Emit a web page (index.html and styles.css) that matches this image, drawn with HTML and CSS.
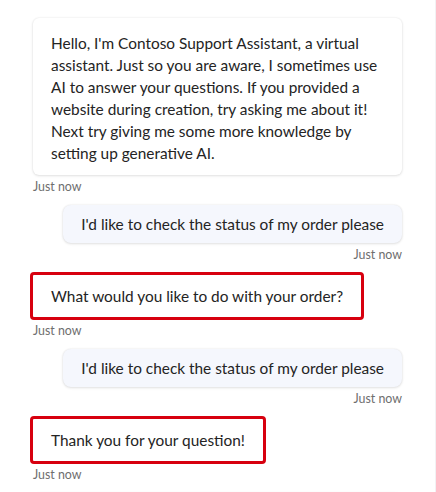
FILE: index.html
```html
<!DOCTYPE html>
<html lang="en">
<head>
<meta charset="utf-8">
<title>Chat</title>
<link rel="stylesheet" href="styles.css">
</head>
<body>
<div class="chat">
  <div class="msg bot">
    <div class="bubble intro">Hello, I'm Contoso Support Assistant, a virtual assistant. Just so you are aware, I sometimes use AI to answer your questions. If you provided a website during creation, try asking me about it! Next try giving me some more knowledge by setting up generative AI.</div>
    <div class="time">Just now</div>
  </div>
  <div class="msg user">
    <div class="bubble">I'd like to check the status of my order please</div>
    <div class="time">Just now</div>
  </div>
  <div class="msg bot flagged">
    <div class="bubble marked">What would you like to do with your order?</div>
    <div class="time">Just now</div>
  </div>
  <div class="msg user">
    <div class="bubble">I'd like to check the status of my order please</div>
    <div class="time">Just now</div>
  </div>
  <div class="msg bot flagged">
    <div class="bubble marked short">Thank you for your question!</div>
    <div class="time">Just now</div>
  </div>
  <div class="msg bot">
    <div class="bubble next"></div>
  </div>
</div>
</body>
</html>
```
FILE: styles.css
```css
html, body {
  margin: 0;
  padding: 0;
  background: #ffffff;
  height: 100%;
  overflow: hidden;
}
body {
  font-family: Lato, "Noto Sans", sans-serif;
  color: #242424;
}
.chat {
  display: flex;
  flex-direction: column;
  gap: 10px;
  padding: 18px 33px 0 33px;
  border-right: 1px solid #f2f2f4;
  height: 100%;
  box-sizing: border-box;
}
.msg {
  display: flex;
  flex-direction: column;
}
.msg.bot { align-items: flex-start; }
.msg.user { align-items: flex-end; }
.msg.flagged { margin-top: 2px; }
.bubble {
  font-size: 15.4px;
  line-height: 22px;
  padding: 10px 18px;
  border-radius: 6px;
  background: #ffffff;
  box-shadow: 0 0 2px rgba(0,0,0,0.10), 0 1px 3px rgba(0,0,0,0.10);
}
.bubble.intro {
  padding: 14px 18px 11px 18px;
}
.bubble.next {
  align-self: stretch;
  height: 40px;
  padding: 0;
}
.msg.user .bubble {
  background: #f5f7fd;
  padding: 8px 18px;
  border-radius: 8px;
}
.bubble.marked {
  outline: 3px solid #d7000f;
  border-radius: 1px;
  box-shadow: none;
}
.bubble.marked.short {
  padding: 10px 18px 10px 18px;
}
.time {
  font-size: 12.4px;
  line-height: 16px;
  color: #6e6e6e;
  margin-top: 4px;
}
.marked + .time {
  margin-top: 6px;
}
```
